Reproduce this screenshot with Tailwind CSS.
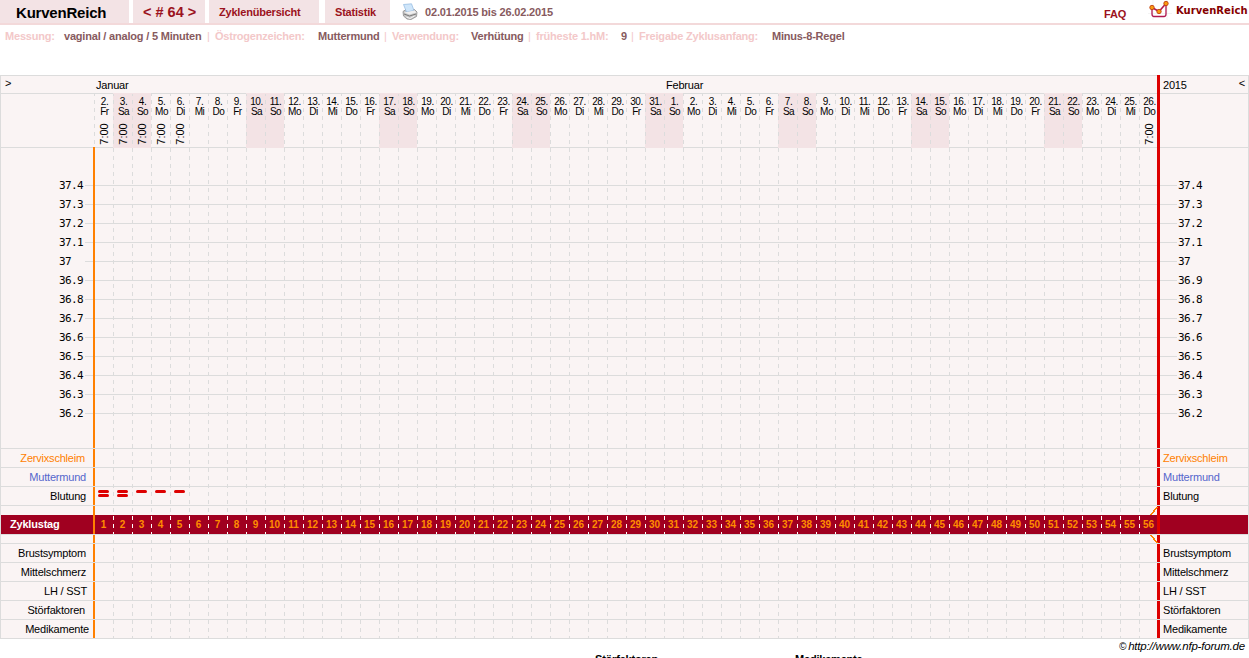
<!DOCTYPE html>
<html lang="de">
<head>
    <meta charset="UTF-8">
    <meta name="viewport" content="width=device-width, initial-scale=1.0">
    <title>KurvenReich</title>
    <script src="https://cdn.jsdelivr.net/npm/@tailwindcss/browser@4"></script>
</head>
<body class="bg-white text-black font-['Liberation_Sans',Arial,sans-serif] text-[11px] leading-[13px] tracking-[-0.2px] w-[1249px] h-[658px] overflow-hidden">

    <header class="flex h-[25px] border-b-2 border-[#f3d9da] font-bold text-[#9b1220]">
        <h1 class="w-[129px] bg-[#f3e3e5] pl-4 pt-[4px] text-[15px] leading-[17px] text-black">KurvenReich</h1>
        <div class="ml-1 w-[72px] bg-[#f3e3e5] pl-[10px] pt-[4px] text-[14.5px] leading-[17px] tracking-normal whitespace-nowrap">&lt; # 64 &gt;</div>
        <a class="ml-1 w-[110px] bg-[#f3e3e5] pl-[10px] pt-[6px]">Zyklenübersicht</a>
        <a class="ml-[6px] w-[65px] bg-[#f3e3e5] pl-[10px] pt-[6px]">Statistik</a>
        <svg class="ml-3 mt-[3px] w-4 h-[18px] shrink-0" viewBox="0 0 16 18">
            <path d="M1 8.500 L4 6.500 L12.500 6.500 L15 9 L14.500 13.500 L9 16.500 L5 16 L1.500 13 Z" fill="#c8c8c8" stroke="#8c8c8c" stroke-width=".8"/>
            <path d="M1.500 1.500 L9.500 .8 L12 7.500 L4.500 9 Z" fill="#cfe6fa" stroke="#8fb8e0" stroke-width=".7"/>
            <path d="M2 9.500 L7.500 11.500 L14.500 9.500 L12.500 7.500 L4.500 9 Z" fill="#efefef"/>
            <path d="M2 11 L7.500 13 L14 11" fill="none" stroke="#707070" stroke-width=".9"/>
            <path d="M4.500 14 L8 15.500 L12.500 13" fill="none" stroke="#f5f5f5" stroke-width="1"/>
        </svg>
        <span class="ml-[7px] pt-[6px] tracking-[-0.17px] text-[#875a5e]">02.01.2015 bis 26.02.2015</span>
        <a class="ml-auto w-[22px] pt-[8px]">FAQ</a>
        <svg class="ml-[22px] w-[24px] h-[20px] shrink-0" viewBox="0 0 24 20">
            <path d="M0 13.500 H24 M5 0 V20 M19 0 V20" stroke="#eeeeee" stroke-width=".7"/>
            <path d="M4 8 V14 Q4 16.500 6 16.500 H16 Q18 16.500 18 14 V5" fill="none" stroke="#b01850" stroke-width="1.3"/>
            <path d="M4 7.500 L11 11.500 L18 3.500" fill="none" stroke="#b01850" stroke-width="1.6"/>
            <g fill="#f89a10" stroke="#c04010" stroke-width=".9">
                <circle cx="4" cy="7.500" r="2.200"/><circle cx="11" cy="11.500" r="2.200"/><circle cx="18" cy="3.500" r="2.200"/>
            </g>
        </svg>
        <span class="ml-[4px] w-[73px] pt-[4px] font-['DejaVu_Sans',sans-serif] text-[10px] tracking-[0.05px] text-[#850000] whitespace-nowrap">KurvenReich</span>
    </header>

    <div class="flex h-[50px] pt-[5px] pl-[5px] font-bold text-[#f3c8c9] whitespace-nowrap">
        <span class="w-[59px]">Messung:</span><span class="w-[143px] text-[#875a5e]">vaginal / analog / 5 Minuten</span>
        <span class="w-[8px] font-normal">|</span><span class="w-[103px]">Östrogenzeichen:</span><span class="w-[66px] text-[#875a5e]">Muttermund</span>
        <span class="w-[8px] font-normal">|</span><span class="w-[79px]">Verwendung:</span><span class="w-[57px] text-[#875a5e]">Verhütung</span>
        <span class="w-[8px] font-normal">|</span><span class="w-[85px]">früheste 1.hM:</span><span class="w-[10px] text-[#875a5e]">9</span>
        <span class="w-[8px] font-normal">|</span><span class="w-[133px]">Freigabe Zyklusanfang:</span><span class="text-[#875a5e]">Minus-8-Regel</span>
    </div>

    <main class="relative h-[564px] bg-[#faf4f4]">
        <svg id="grid" class="absolute inset-0" width="1249" height="564" viewBox="0 75 1249 564" shape-rendering="crispEdges"></svg>

        <div class="relative flex flex-col">
            <div class="flex h-[19px] pt-[4px]">
                <span class="w-[96px] pl-[5px] -mt-[2px]">&gt;</span>
                <span class="w-[570px]">Januar</span>
                <span class="w-[497px]">Februar</span>
                <span>2015</span>
                <span class="ml-auto pr-1 -mt-[2px]">&lt;</span>
            </div>
            <div id="days" class="flex h-[54px] pl-[95px] text-[10px] leading-[10px] tracking-[-0.5px]"></div>
            <div class="flex h-[300px] pt-[28px] justify-between font-['DejaVu_Sans_Mono',monospace] text-[11px] leading-[19px] tracking-[-0.6px]">
                <div id="tempLeft" class="pl-[59px]"></div>
                <div id="tempRight" class="w-[71px]"></div>
            </div>
            <div id="rowsTop" class="pt-px"></div>
            <div class="mt-[9px] flex h-[19px] items-center font-bold text-[10px] tracking-normal">
                <span class="w-[94px] pl-[10px] text-[11px] tracking-[-0.2px] text-white">Zyklustag</span>
                <div id="cycle" class="flex text-[#ff8c00]"></div>
            </div>
            <div id="rowsBottom" class="mt-[10px]"></div>
        </div>
    </main>

    <footer>
        <div class="text-right italic pr-[4px] pt-px text-[11.5px] leading-[13px] whitespace-nowrap"><span class="text-[10px]">©</span><span class="pl-[2px]">http://www.nfp-forum.de</span></div>
        <div class="flex pl-[595px] font-bold"><span class="w-[200px]">Störfaktoren</span><span>Medikamente</span></div>
    </footer>

    <script>
        const grid = document.getElementById('grid');
        const weekdays = ['Do', 'Fr', 'Sa', 'So', 'Mo', 'Di', 'Mi'];
        const temps = ['37.4', '37.3', '37.2', '37.1', '37', '36.9', '36.8', '36.7', '36.6', '36.5', '36.4', '36.3', '36.2'];
        const DAYS = 56;

        const rect = (x, y, w, h, fill) => `<rect x="${x}" y="${y}" width="${w}" height="${h}" fill="${fill}"/>`;
        const isWeekend = i => [2, 3].includes((i + 1) % 7);

        // --- grid ---
        let g = '';
        [75, 93, 147].forEach(y => g += rect(0, y, 1249, 1, '#dcdcdc'));
        temps.forEach((t, i) => g += rect(85, 185 + i * 19, 1092, 1, '#dcdcdc'));
        for (let i = 0; i < DAYS; i++) {
            if (isWeekend(i)) g += rect(94 + i * 19, 93, 19, 55, '#f3e3e5');
        }
        g += rect(0, 515, 1249, 19, '#a00020');
        for (let i = 0; i < DAYS; i++) {
            const x = 94 + i * 19;
            for (let y = 92; y < 638; y += 8) {
                if (i === 0 && y > 147) break;
                g += rect(x, Math.max(y, 94), 1, y < 94 ? 2 : 4, y > 512 && y < 534 ? '#ffffff' : '#dcdcdc');
            }
        }
        g += rect(93, 147, 2, 491, '#ff8000');
        g += rect(1157, 75, 3, 563, '#dd0000');
        [448, 467, 486, 505, 534, 543, 562, 581, 600, 619, 638].forEach(y => g += rect(0, y, 1249, 1, '#dcdcdc'));
        g += rect(0, 75, 1, 564, '#dcdcdc') + rect(1248, 75, 1, 564, '#dcdcdc');
        g += '<path d="M1151 515 L1157 507 M1151 535 L1157 543" stroke="#ff8000" stroke-width="1.5"/>';
        // bleeding marks
        [2, 2, 1, 1, 1].forEach((n, i) => {
            for (let k = 0; k < n; k++) {
                g += `<rect x="${98 + i * 19}" y="${490 + k * 4}" width="11" height="3" rx="1.5" fill="#dd0000" shape-rendering="auto"/>`;
            }
        });
        grid.innerHTML = g;

        // --- labels ---
        let days = '', cycle = '';
        for (let i = 0; i < DAYS; i++) {
            const date = new Date(2015, 0, 2 + i).getDate();
            const time = i < 5 || i === DAYS - 1 ? '<span class="mt-[12px] mr-[2px] -rotate-90 text-[11px] tracking-normal">7:00</span>' : '';
            days += `<div class="w-[19px] pt-[3px] flex flex-col items-center"><span>${date}.</span><span>${weekdays[(i + 1) % 7]}</span>${time}</div>`;
            cycle += `<span class="w-[19px] text-center">${i + 1}</span>`;
        }
        document.getElementById('days').innerHTML = days;
        document.getElementById('cycle').innerHTML = cycle;
        const tempHtml = temps.map(t => `<div>${t}</div>`).join('');
        document.getElementById('tempLeft').innerHTML = tempHtml;
        document.getElementById('tempRight').innerHTML = tempHtml;

        function rows(id, items) {
            document.getElementById(id).innerHTML = items.map(([label, color, right]) =>
                `<div class="flex h-[19px] items-center ${color}"><span class="w-[1163px]"><span class="block text-right" style="width:${right}px">${label}</span></span><span>${label}</span></div>`).join('');
        }
        rows('rowsTop', [['Zervixschleim', 'text-[#ff8000]', 85], ['Muttermund', 'text-[#5566cc]', 86], ['Blutung', 'text-black', 86]]);
        rows('rowsBottom', [['Brustsymptom', 'text-black', 86], ['Mittelschmerz', 'text-black', 86], ['LH / SST', 'text-black', 87], ['Störfaktoren', 'text-black', 85], ['Medikamente', 'text-black', 89]]);
    </script>
</body>
</html>
